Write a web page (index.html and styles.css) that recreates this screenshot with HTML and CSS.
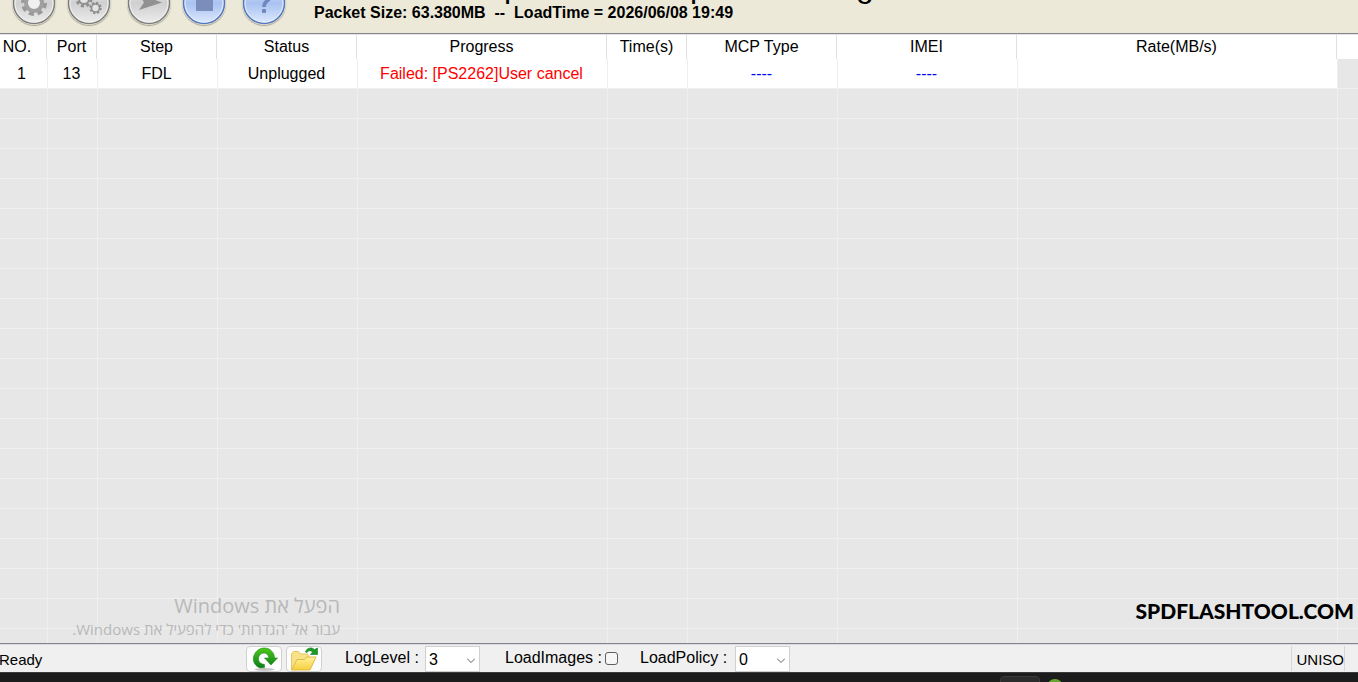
FILE: index.html
```
<!DOCTYPE html>
<html lang="en">
<head>
    <meta charset="UTF-8">
    <title>Download Tool</title>
    <link rel="stylesheet" href="styles.css">
</head>
<body>
    <div class="toolbar">
        <div class="tools">
            <button type="button" class="tool" aria-label="Settings">
                <svg viewBox="0 0 44 44">
                    <defs>
                        <linearGradient id="grey" x1="0" y1="0" x2="0" y2="1">
                            <stop offset="0" stop-color="#f4f4f4"/>
                            <stop offset="0.5" stop-color="#cfcfcf"/>
                            <stop offset="1" stop-color="#ededed"/>
                        </linearGradient>
                        <linearGradient id="blue" x1="0" y1="0" x2="0" y2="1">
                            <stop offset="0" stop-color="#eaf1ff"/>
                            <stop offset="0.5" stop-color="#a9c2f0"/>
                            <stop offset="1" stop-color="#dde9ff"/>
                        </linearGradient>
                    </defs>
                    <circle cx="22" cy="22" r="20.500" fill="url(#grey)" stroke="#7d7d7d" stroke-width="1.500"/>
                    <circle cx="22" cy="22" r="19" fill="none" stroke="#f2f2f2"/>
                    <circle cx="22" cy="22" r="11" fill="none" stroke="#999" stroke-width="4" stroke-dasharray="5 3.640"/>
                    <circle cx="22" cy="22" r="8" fill="#f0f0f0" stroke="#a0a0a0" stroke-width="4"/>
                </svg>
            </button>
            <button type="button" class="tool" aria-label="Options">
                <svg viewBox="0 0 44 44">
                    <circle cx="22" cy="22" r="20.500" fill="url(#grey)" stroke="#7d7d7d" stroke-width="1.500"/>
                    <circle cx="22" cy="22" r="19" fill="none" stroke="#f2f2f2"/>
                    <circle cx="17" cy="18" r="7" fill="none" stroke="#8e8e8e" stroke-width="3" stroke-dasharray="3 2.500"/>
                    <circle cx="17" cy="18" r="5" fill="#e3e3e3" stroke="#8e8e8e" stroke-width="2"/>
                    <circle cx="28.500" cy="27" r="5.200" fill="none" stroke="#8e8e8e" stroke-width="2" stroke-dasharray="2.200 1.880"/>
                    <circle cx="28.500" cy="27" r="4" fill="#e3e3e3" stroke="#8e8e8e" stroke-width="1.600"/>
                </svg>
            </button>
            <button type="button" class="tool gap" aria-label="Start">
                <svg viewBox="0 0 44 44">
                    <circle cx="22" cy="22" r="20.500" fill="url(#grey)" stroke="#7d7d7d" stroke-width="1.500"/>
                    <circle cx="22" cy="22" r="19" fill="none" stroke="#f2f2f2"/>
                    <path d="M12 13 L35 21.500 L12 29 L17 21.500 Z" fill="#919191"/>
                </svg>
            </button>
            <button type="button" class="tool" aria-label="Stop">
                <svg viewBox="0 0 44 44">
                    <circle cx="22" cy="22" r="20.500" fill="url(#blue)" stroke="#5476bd" stroke-width="1.500"/>
                    <circle cx="22" cy="22" r="19" fill="none" stroke="#e6efff"/>
                    <rect x="14" y="13" width="17" height="17" fill="#7a8dbb"/>
                </svg>
            </button>
            <button type="button" class="tool gap" aria-label="Help">
                <svg viewBox="0 0 44 44">
                    <circle cx="22" cy="22" r="20.500" fill="url(#blue)" stroke="#5476bd" stroke-width="1.500"/>
                    <circle cx="22" cy="22" r="19" fill="none" stroke="#e6efff"/>
                    <path d="M16 15 a6 6 0 1 1 9 5 q-3 2 -3 6" fill="none" stroke="#6f86bf" stroke-width="3.500"/>
                    <rect x="20" y="28" width="4" height="4" rx="1" fill="#6f86bf"/>
                </svg>
            </button>
        </div>
        <div class="info">
            <div class="product"><span>p</span><span>p</span><span>g</span></div>
            <div class="packet">Packet Size: 63.380MB&nbsp; --&nbsp; LoadTime = 2026/06/08 19:49</div>
        </div>
    </div>

    <div class="grid">
        <table>
            <colgroup>
                <col class="c-no">
                <col class="c-port">
                <col class="c-step">
                <col class="c-status">
                <col class="c-progress">
                <col class="c-time">
                <col class="c-mcp">
                <col class="c-imei">
                <col class="c-rate">
                <col>
            </colgroup>
            <thead>
                <tr>
                    <th class="no">NO.</th><th>Port</th><th>Step</th><th>Status</th><th>Progress</th>
                    <th>Time(s)</th><th>MCP Type</th><th>IMEI</th><th>Rate(MB/s)</th><th></th>
                </tr>
            </thead>
            <tbody>
                <tr class="device">
                    <td class="no">1</td><td>13</td><td>FDL</td><td>Unplugged</td>
                    <td class="failed">Failed: [PS2262]User cancel</td>
                    <td></td><td class="blank">----</td><td class="blank">----</td><td></td><td></td>
                </tr>
                <tr><td></td><td></td><td></td><td></td><td></td><td></td><td></td><td></td><td></td><td></td></tr>
                <tr><td></td><td></td><td></td><td></td><td></td><td></td><td></td><td></td><td></td><td></td></tr>
                <tr><td></td><td></td><td></td><td></td><td></td><td></td><td></td><td></td><td></td><td></td></tr>
                <tr><td></td><td></td><td></td><td></td><td></td><td></td><td></td><td></td><td></td><td></td></tr>
                <tr><td></td><td></td><td></td><td></td><td></td><td></td><td></td><td></td><td></td><td></td></tr>
                <tr><td></td><td></td><td></td><td></td><td></td><td></td><td></td><td></td><td></td><td></td></tr>
                <tr><td></td><td></td><td></td><td></td><td></td><td></td><td></td><td></td><td></td><td></td></tr>
                <tr><td></td><td></td><td></td><td></td><td></td><td></td><td></td><td></td><td></td><td></td></tr>
                <tr><td></td><td></td><td></td><td></td><td></td><td></td><td></td><td></td><td></td><td></td></tr>
                <tr><td></td><td></td><td></td><td></td><td></td><td></td><td></td><td></td><td></td><td></td></tr>
                <tr><td></td><td></td><td></td><td></td><td></td><td></td><td></td><td></td><td></td><td></td></tr>
                <tr><td></td><td></td><td></td><td></td><td></td><td></td><td></td><td></td><td></td><td></td></tr>
                <tr><td></td><td></td><td></td><td></td><td></td><td></td><td></td><td></td><td></td><td></td></tr>
                <tr><td></td><td></td><td></td><td></td><td></td><td></td><td></td><td></td><td></td><td></td></tr>
                <tr><td></td><td></td><td></td><td></td><td></td><td></td><td></td><td></td><td></td><td></td></tr>
                <tr><td></td><td></td><td></td><td></td><td></td><td></td><td></td><td></td><td></td><td></td></tr>
                <tr><td></td><td></td><td></td><td></td><td></td><td></td><td></td><td></td><td></td><td></td></tr>
                <tr><td></td><td></td><td></td><td></td><td></td><td></td><td></td><td></td><td></td><td></td></tr>
                <tr><td></td><td></td><td></td><td></td><td></td><td></td><td></td><td></td><td></td><td></td></tr>
            </tbody>
        </table>
        <div class="activate" dir="rtl" lang="he">
            <div class="activate-title">הפעל את Windows</div>
            <div class="activate-text">עבור אל 'הגדרות' כדי להפעיל את Windows.</div>
        </div>
        <div class="site">SPDFLASHTOOL.COM</div>
    </div>

    <div class="statusbar">
        <div class="ready">Ready</div>
        <button type="button" class="small" aria-label="Reload">
            <svg viewBox="0 0 33 24">
                <defs>
                    <linearGradient id="green" x1="0" y1="0" x2="0" y2="1">
                        <stop offset="0" stop-color="#4cc916"/>
                        <stop offset="1" stop-color="#0b7c1c"/>
                    </linearGradient>
                </defs>
                <ellipse cx="17" cy="22.500" rx="10" ry="1.500" fill="#c4c4c4"/>
                <path d="M13 21 C8 19.500 5 15 6 10 C7.500 4 12 1 17 1 C23 1 27 6 27 11 L30 11 L23.500 18 L17 11 L21.500 11 C21 8 19 6 16.500 6 C13 6 11 9 11 12 C11 15 13 17 17 17.500 L17 20.500 Z" fill="url(#green)" stroke="#1c8a1c" stroke-width="0.600"/>
            </svg>
        </button>
        <button type="button" class="small" aria-label="Open folder">
            <svg viewBox="0 0 33 24">
                <defs>
                    <linearGradient id="folder" x1="0" y1="0" x2="0" y2="1">
                        <stop offset="0" stop-color="#fff09a"/>
                        <stop offset="1" stop-color="#f6cf3c"/>
                    </linearGradient>
                </defs>
                <path d="M4 22.500 V7 L6 4.500 H11 L13 7 H20 L21 8.500 V20 Z" fill="#f8e287" stroke="#e3c763"/>
                <path d="M4 23 L9.500 12.500 H17 L19 10 H28.500 L22.500 23 Z" fill="url(#folder)" stroke="#dfbb45"/>
                <path d="M18 5 C19 1 24 -0.500 27 2.500 L30 1 V7.500 H23 L25 5 C23 3 20.500 3.500 19.500 5.500 Z" fill="#1c9a28" stroke="#0f7a1c" stroke-width="0.600"/>
            </svg>
        </button>
        <label class="log-label" for="logLevel">LogLevel :</label>
        <div class="combo">
            <select id="logLevel"><option>0</option><option>1</option><option>2</option><option selected>3</option></select>
            <svg viewBox="0 0 8 5"><path d="M0 0.500 L4 4.500 L8 0.500" fill="none" stroke="#606060"/></svg>
        </div>
        <label class="images-label" for="loadImages">LoadImages :</label>
        <input type="checkbox" id="loadImages">
        <label class="policy-label" for="loadPolicy">LoadPolicy :</label>
        <div class="combo">
            <select id="loadPolicy"><option>0</option><option>1</option></select>
            <svg viewBox="0 0 8 5"><path d="M0 0.500 L4 4.500 L8 0.500" fill="none" stroke="#606060"/></svg>
        </div>
        <div class="vendor">UNISO</div>
    </div>

    <div class="taskbar">
        <div class="task"></div>
        <div class="dot"></div>
    </div>
</body>
</html>
```
FILE: styles.css
```
* {
    box-sizing: border-box;
}

body {
    margin: 0;
    height: 100vh;
    display: flex;
    flex-direction: column;
    overflow: hidden;
    background-color: #e7e7e7;
    font-family: "Liberation Sans", Arial, sans-serif;
    font-size: 16px;
    color: #000;
}

button {
    padding: 0;
    border: none;
    cursor: pointer;
}

svg {
    display: block;
}

/* toolbar */
.toolbar {
    flex: none;
    display: flex;
    align-items: flex-end;
    height: 34px;
    overflow: hidden;
    background-color: #ece9d8;
    border-bottom: 1px solid #85838f;
}

.tools {
    display: flex;
    gap: 11px;
    padding: 0 0 8px 12px;
}

.tool {
    width: 44px;
    height: 44px;
    border-radius: 50%;
    background: none;
    box-shadow: 0 1px 1px #a8a598;
}

.tool.gap {
    margin-left: 5px;
}

.info {
    margin-left: 28px;
    padding-bottom: 10px;
    line-height: 20px;
    white-space: nowrap;
}

.product {
    display: grid;
    grid-template-columns: 186px 166px auto;
    padding-left: 190px;
    margin-bottom: 2px;
    font-size: 32px;
    line-height: 30px;
}

.packet {
    font-weight: bold;
}

/* device grid */
.grid {
    position: relative;
    flex: 1;
    min-height: 0;
    overflow: hidden;
    border-top: 1px solid #e4e4e4;
    border-bottom: 1px solid #85838f;
}

table {
    width: 100%;
    table-layout: fixed;
    border-collapse: separate;
    border-spacing: 0;
}

th, td {
    padding: 0;
    font-weight: normal;
    text-align: center;
    white-space: nowrap;
}

th {
    height: 24px;
    background-color: #fff;
    border-right: 1px solid #e0e0e0;
}

th:last-child {
    border-right: none;
}

td {
    height: 30px;
    padding-right: 2px;
    border-left: 1px solid #efefef;
    border-bottom: 1px solid #efefef;
}

td:first-child {
    border-left: none;
}

.device td:not(:last-child) {
    background-color: #fff;
}

th.no {
    padding-right: 12px;
}

td.no {
    padding-right: 4px;
}

.c-no { width: 47px; }
.c-port { width: 50px; }
.c-step { width: 120px; }
.c-status { width: 140px; }
.c-progress { width: 250px; }
.c-time { width: 80px; }
.c-mcp { width: 150px; }
.c-imei { width: 180px; }
.c-rate { width: 320px; }

.failed {
    color: #f00;
}

.blank {
    color: #00f;
}

.activate {
    position: absolute;
    left: 60px;
    bottom: 3px;
    width: 280px;
    font-family: "Open Sans", "Noto Sans", sans-serif;
    color: #b8b8b8;
    white-space: nowrap;
}

.activate-title {
    font-size: 20px;
    line-height: 24px;
}

.activate-text {
    font-size: 15px;
    line-height: 22px;
}

.site {
    position: absolute;
    right: 4px;
    bottom: 18px;
    font-family: Lato, sans-serif;
    font-size: 21px;
    line-height: 28px;
    font-weight: 900;
}

/* status bar */
.statusbar {
    flex: none;
    display: flex;
    align-items: center;
    height: 28px;
    background-color: #f0f0f0;
    border-top: 1px solid #dcdcdc;
    white-space: nowrap;
}

.statusbar label {
    padding-bottom: 2px;
}

.ready {
    width: 247px;
    margin-left: -1px;
    padding-top: 2px;
    font-size: 15px;
}

.small {
    width: 36px;
    height: 26px;
    margin-right: 4px;
    background-color: #fdfdfd;
    border: 1px solid #d0d0d0;
    border-radius: 4px;
}

.small svg {
    width: 34px;
    height: 24px;
}

.log-label {
    width: 80px;
    margin-left: 19px;
}

.combo {
    position: relative;
    width: 55px;
    height: 26px;
}

.combo select {
    width: 100%;
    height: 100%;
    padding: 2px 3px 0;
    appearance: none;
    background-color: #fff;
    border: 1px solid #d0d0d0;
    border-radius: 0;
    font: inherit;
    color: #000;
}

.combo svg {
    position: absolute;
    right: 5px;
    top: 12px;
    width: 8px;
    height: 5px;
    pointer-events: none;
}

.images-label {
    width: 100px;
    margin-left: 25px;
}

.statusbar input {
    appearance: none;
    width: 13px;
    height: 13px;
    margin: 0;
    background-color: #f6f6f6;
    border: 1px solid #5f5f5f;
    border-radius: 3px;
}

.statusbar input:checked {
    background-color: #0067c0;
}

.policy-label {
    width: 95px;
    margin-left: 22px;
}

.vendor {
    height: 25px;
    margin: 0 13px 0 auto;
    padding: 5px 0 0 4px;
    border-left: 1px solid #d7d7d7;
    border-right: 1px solid #d7d7d7;
    font-size: 15px;
}

/* top edge of the desktop taskbar */
.taskbar {
    flex: none;
    display: flex;
    align-items: flex-start;
    justify-content: flex-end;
    height: 10px;
    padding: 3px 295px 0 0;
    overflow: hidden;
    background-color: #1c1c1c;
    border-top: 1px solid #3c3c3c;
}

.task {
    width: 40px;
    height: 20px;
    background-color: #2b2b2b;
    border: 1px solid #3a3a3a;
    border-radius: 4px;
}

.dot {
    width: 16px;
    height: 16px;
    margin: 3px 0 0 7px;
    background-color: #6aa534;
    border-radius: 50%;
}
```
